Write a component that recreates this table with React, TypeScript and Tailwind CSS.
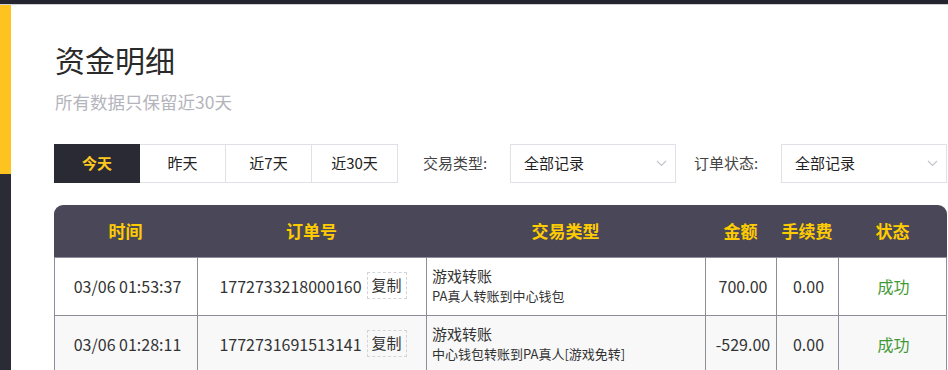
import React from "react";

const F = { fontFamily: '"Noto Sans CJK SC", "Noto Sans", sans-serif' };

const rows = [
  {
    time: "03/06 01:53:37",
    order: "1772733218000160",
    t1: "游戏转账",
    t2: "PA真人转账到中心钱包",
    amount: "700.00",
    fee: "0.00",
    status: "成功",
    bg: "bg-white",
  },
  {
    time: "03/06 01:28:11",
    order: "1772731691513141",
    t1: "游戏转账",
    t2: "中心钱包转账到PA真人[游戏免转]",
    amount: "-529.00",
    fee: "0.00",
    status: "成功",
    bg: "bg-[#f8f8f9]",
  },
];

function Chevron() {
  return (
    <svg width="11" height="7" viewBox="0 0 11 7" fill="none">
      <path d="M1 1l4.5 4.5L10 1" stroke="#c4c4cc" strokeWidth="1.2" />
    </svg>
  );
}

function Select({ label, ml }: { label: string; ml: string }) {
  return (
    <>
      <div className={`${ml} w-[87px] shrink-0 text-[15px] text-[#444]`}>{label}</div>
      <div className="w-[166px] shrink-0 h-[39px] border border-[#e0e0e6] flex items-center justify-between pl-[13px] pr-[8px] text-[15px] text-[#222]">
        <span>全部记录</span>
        <Chevron />
      </div>
    </>
  );
}

export default function App() {
  const tabs = ["今天", "昨天", "近7天", "近30天"];
  const cols = "grid grid-cols-[143px_229px_279px_71px_62px_109px]";
  return (
    <div style={F} className="w-[948px] h-[370px] overflow-hidden bg-white flex flex-col text-[#333]">
      <div className="h-[4px] bg-[#24242e] shrink-0" />
      <div className="h-px bg-[#cfcfd6] shrink-0" />
      <div className="flex flex-1 min-h-0">
        <div className="w-[11px] flex flex-col shrink-0">
          <div className="h-[169px] bg-[#ffc31f]" />
          <div className="flex-1 bg-[#2b2b36]" />
        </div>
        <div className="flex-1 pl-[43px] pr-px pt-[34px]">
          <div className="text-[30px] leading-[40px] text-[#2a2a2a] pl-px">资金明细</div>
          <div className="mt-[11px] text-[17.5px] leading-[24px] text-[#b4b4bc] pl-px">所有数据只保留近30天</div>

          <div className="mt-[30px] flex items-center h-[39px]">
            <div className="flex shrink-0">
              {tabs.map((t, i) => (
                <div
                  key={t}
                  className={
                    "w-[86px] h-[39px] flex items-center justify-center text-[15px] border-y border-r " +
                    (i === 0
                      ? "border-l bg-[#2a2a35] border-[#2a2a35] text-[#ffc81e] font-bold"
                      : "border-[#e0e0e6] text-[#222]")
                  }
                >
                  {t}
                </div>
              ))}
            </div>
            <Select label="交易类型:" ml="ml-[25px]" />
            <Select label="订单状态:" ml="ml-[18px]" />
          </div>

          <div className="mt-[22px] w-[893px]">
            <div className={`${cols} h-[53px] bg-[#4a4858] rounded-t-[9px] border-b border-[#8e8e98] text-[17px] font-bold text-[#ffcc00]`}>
              {["时间", "订单号", "交易类型", "金额", "手续费", "状态"].map((h) => (
                <div key={h} className="flex items-center justify-center">
                  {h}
                </div>
              ))}
            </div>
            {rows.map((r) => (
              <div key={r.order} className={`${cols} h-[58px] ${r.bg} border-x border-b border-[#8e8e98] text-[16px] text-[#333]`}>
                <div className="flex items-center justify-center border-r border-[#8e8e98] pl-[3px] pb-[2px]">{r.time}</div>
                <div className="flex items-center justify-center border-r border-[#8e8e98] pl-[2px] pb-[2px]">
                  <span>{r.order}</span>
                  <span className="ml-[5px] h-[27px] px-[4px] flex items-center border border-dashed border-[#d4d4d8] text-[15px]">复制</span>
                </div>
                <div className="flex flex-col justify-center border-r border-[#8e8e98] pl-[5px] pb-[2px]">
                  <div className="text-[15px] leading-[20px]">{r.t1}</div>
                  <div className="text-[13px] leading-[19px]">{r.t2}</div>
                </div>
                <div className="flex items-center justify-center border-r border-[#8e8e98] pl-[4px] pb-[2px]">{r.amount}</div>
                <div className="flex items-center justify-center border-r border-[#8e8e98] pl-[2px] pb-[2px]">{r.fee}</div>
                <div className="flex items-center justify-center text-[#3f9a36] pb-[2px]">{r.status}</div>
              </div>
            ))}
          </div>
        </div>
      </div>
    </div>
  );
}
